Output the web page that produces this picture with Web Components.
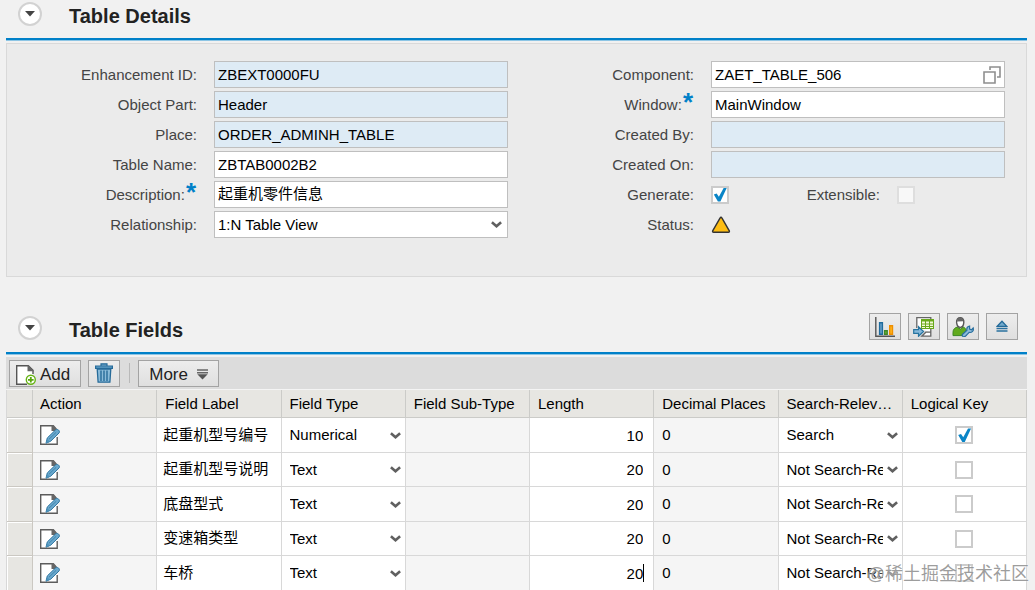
<!DOCTYPE html>
<html lang="en">
<head>
<meta charset="utf-8">
<title>Table Details</title>
<style>
	body {
		margin: 0;
		padding: 0 8px 0 6px;
		background: #f1f1f1;
		color: #000;
		font: 15px/20px "Liberation Sans", "Noto Sans CJK SC", sans-serif;
	}
	page-section + page-section {
		margin-top: 37px;
	}
</style>
</head>
<body>
<page-section heading="Table Details">
	<form-panel>
		<form-field label="Enhancement ID" value="ZBEXT0000FU" readonly></form-field>
		<form-field label="Object Part" value="Header" readonly></form-field>
		<form-field label="Place" value="ORDER_ADMINH_TABLE" readonly></form-field>
		<form-field label="Table Name" value="ZBTAB0002B2"></form-field>
		<form-field label="Description" value="起重机零件信息" lang="zh" required></form-field>
		<form-field label="Relationship" value="1:N Table View" type="select"></form-field>
		<form-field slot="right" label="Component" value="ZAET_TABLE_506" type="help"></form-field>
		<form-field slot="right" label="Window" value="MainWindow" required></form-field>
		<form-field slot="right" label="Created By" readonly></form-field>
		<form-field slot="right" label="Created On" readonly></form-field>
		<form-field slot="right" label="Generate" type="checks" extra="Extensible"></form-field>
		<form-field slot="right" label="Status" type="status"></form-field>
	</form-panel>
</page-section>
<page-section heading="Table Fields">
	<tool-button slot="tools" icon="chart" label="Chart"></tool-button>
	<tool-button slot="tools" icon="export" label="Export"></tool-button>
	<tool-button slot="tools" icon="user" label="Personalize"></tool-button>
	<tool-button slot="tools" icon="eject" label="Collapse"></tool-button>
	<tool-bar>
		<tool-button icon="add" wide>Add</tool-button>
		<tool-button icon="trash" label="Delete"></tool-button>
		<hr>
		<tool-button icon="more" wide trailing>More</tool-button>
	</tool-bar>
	<fields-table></fields-table>
</page-section>
<water-mark>@稀土掘金技术社区</water-mark>

<script>
const icons = {
	chart: `<svg width="20" height="20" viewBox="0 0 20 20"><path d="M.8 0v19.2H20" fill="none" stroke="#555" stroke-width="1.4"/><path d="M4.6 5.8h2.8v11.4H4.6z" fill="#6ba4cd" stroke="#1f6b9d" stroke-width="1.4"/><path d="M9.6 13.8h2.6v3.4H9.6z" fill="#71b92e" stroke="#3f862b" stroke-width="1.4"/><path d="M14.7 8.7h2.8v8.5h-2.8z" fill="#ffb61c" stroke="#ee8e00" stroke-width="1.4"/></svg>`,
	export: `<svg width="22" height="20" viewBox="0 0 22 20"><path d="M3.8 11V.7h14v18.5h-9l4-4h5" fill="#fff" stroke="#666" stroke-width="1.3"/><path d="M8 2h13v10H8z" fill="#68a91b"/><path d="M9 4.5h3v2H9zM13 4.5h3v2h-3zM17 4.5h3v2h-3zM9 7.5h3v1.4H9zM13 7.5h3v1.4h-3zM17 7.5h3v1.4h-3zM9 10h3v1H9zM13 10h3v1h-3zM17 10h3v1h-3z" fill="#f3f8d8"/><path d="M.7 12.6h4.8V9.7l5 4.8-5 4.8v-2.9H.7z" fill="#86b8da" stroke="#27749f" stroke-width="1.2"/></svg>`,
	user: `<svg width="22" height="20" viewBox="0 0 22 20"><path d="M1 18.6v-3.3c0-3 2-4.7 4.3-5.2l3 2 3-2c1.8.7 2.9 2 2.9 4v4.5z" fill="#61aa1d" stroke="#3c8723"/><path d="M4.6 5.4C4.4 2.2 6 .8 8.2.8s3.9 1.6 3.6 4.6c-.2 2.8-1.6 5-3.6 5s-3.3-2-3.6-5z" fill="#fff" stroke="#555" stroke-width="1.4"/><path d="M5 4.5l6.6-.2-.7-2.6-3-1-2.5 1.5z" fill="#666"/><path d="M10.6 17.2l4.3-3.9c-.4-2 .5-3.8 2.7-4.3v3.1l2 .6 1.6-1.8c.8 2.8-1.2 5-4 4.5l-3.9 3.9c-1.8 1.3-4-.4-2.7-2.1z" fill="#8dbad8" stroke="#286f9f" stroke-width="1.2"/></svg>`,
	eject: `<svg width="12" height="20" viewBox="0 0 12 20"><path d="M1.2 9.3L6 4.2l4.8 5.1z" fill="#72aacd" stroke="#256b99" stroke-width="1.3"/><path d="M.5 11.5h11M.5 14h11" stroke="#2a719f" stroke-width="1.4"/></svg>`,
	add: `<svg width="20" height="20" viewBox="0 0 20 20"><path d="M11 19.2H.7V.7h11.6L17 5.3V9" fill="#fff" stroke="#555" stroke-width="1.4"/><path d="M11.5 0L18 6.2h-6.5z" fill="#666"/><circle cx="14.8" cy="14.8" r="4.5" fill="#fff" stroke="#65b313" stroke-width="1.4"/><path d="M14.8 12v5.6M12 14.8h5.6" stroke="#58a60b" stroke-width="1.8"/></svg>`,
	trash: `<svg width="18" height="20" viewBox="0 0 18 20"><path d="M6 2.8V.8h6v2M.6 3h16.8v2.3H.6z" fill="#62a0c8" stroke="#276b99" stroke-width="1.2"/><path d="M2.2 6h13.6l-.9 13.2H3.1z" fill="#8abbd9" stroke="#276b99" stroke-width="1.3"/><path d="M6 7.5V18M9 7.5V18M12 7.5V18" stroke="#276b99" stroke-width="1.4"/></svg>`,
	more: `<svg width="11" height="11" viewBox="0 0 11 11"><path d="M0 1h11M0 3.8h11" stroke="#666" stroke-width="1.6"/><path d="M.3 5.2h10.4L5.5 10.4z" fill="#555"/></svg>`,
	edit: `<svg width="20" height="20" viewBox="0 0 20 20"><path d="M17.2 12v7.2H.7V.7h12L16 4" fill="#fff" stroke="#5c5c5c" stroke-width="1.4"/><path d="M11.5 0h2.2L17 4l-2 2h-3.5z" fill="#666"/><path d="M6 18.2l1.3-5.3 8.4-8.1c1.8-1.4 4.8 1.2 3.4 3.1l-8.4 8.3z" fill="#6ba9ce" stroke="#2c749f" stroke-width="1"/><path d="M8.9 14.3l7.3-7" stroke="#3d84ad" stroke-width="1"/><path d="M6 18.2l1.2-4.2 2.8 2.8z" fill="#4e93bb"/></svg>`,
	chevron: `<svg class="chevron" width="11" height="7" viewBox="0 0 11 7"><path d="M.9 1.2l4.6 4 4.6-4" fill="none" stroke="#606060" stroke-width="2.6"/></svg>`,
	help: `<svg class="help" width="18" height="18" viewBox="0 0 18 18"><path d="M7 4V1h10v10h-3M1 6h11v11H1z" fill="none" stroke="#8f8f8f" stroke-width="1.6"/></svg>`,
	warning: `<svg width="20" height="18" viewBox="0 0 20 18" role="img" aria-label="Warning"><path d="M9 2.2Q10 .2 11 2.2l7.3 12.6q.5 1.4-.9 1.4H2.6q-1.4 0-.9-1.4z" fill="#fdbd13" stroke="#333" stroke-width="1.4"/></svg>`,
	collapse: `<svg width="10" height="6" viewBox="0 0 10 6"><path d="M0 0h10L5 5.6z" fill="#444"/></svg>`
};

// shared by every shadow root that holds inputs
const controlStyle = `
	* { box-sizing: border-box; }
	input, select, button { font: inherit; color: inherit; margin: 0; }
	input:focus, select:focus { outline: none; }
	select { appearance: none; cursor: pointer; }
	.stack { display: grid; align-items: center; min-width: 0; }
	.stack > * { grid-area: 1 / 1; }
	.stack > svg { justify-self: end; pointer-events: none; }
	input[type="checkbox"] {
		appearance: none;
		display: grid;
		place-items: center;
		width: 18px;
		height: 18px;
		border: 2px solid #cbcbcb;
		background: #fff;
	}
	input[type="checkbox"]:checked::before {
		content: "";
		width: 14px;
		height: 14px;
		background: #0a85c7;
		clip-path: polygon(6% 50%, 26% 42%, 42% 66%, 76% 4%, 98% 4%, 53% 100%, 35% 100%);
	}
	input[type="checkbox"]:disabled { border-color: #dedede; background: #f8f8f8; }
`;

class PageSection extends HTMLElement {
	connectedCallback() {
		this.attachShadow({ mode: "open" }).innerHTML = `
      <style>
        :host { display: block; }
        header {
          display: flex;
          align-items: flex-end;
          height: 38px;
          box-sizing: border-box;
          padding: 0 9px 12px 12px;
        }
        .toggle {
          display: grid;
          place-items: center;
          width: 24px;
          height: 24px;
          padding: 0;
          border: 2px solid #d2d2d2;
          border-radius: 50%;
          background: #fff;
        }
        h2 { flex: 1; margin: 0 0 0 27px; font-size: 20px; line-height: 20px; color: #222; }
        .tools { display: flex; gap: 7px; }
        .line { height: 2px; background: #0080c8; border-bottom: 1px solid #8dc5e4; margin-bottom: 2px; }
      </style>
      <header>
        <button class="toggle" aria-label="Collapse section">${icons.collapse}</button>
        <h2>${this.getAttribute("heading")}</h2>
        <div class="tools"><slot name="tools"></slot></div>
      </header>
      <div class="line"></div>
      <div class="content"><slot></slot></div>
    `;
		this.shadowRoot.querySelector(".toggle").addEventListener("click", this.toggle.bind(this));
	}

	toggle() {
		const content = this.shadowRoot.querySelector(".content");
		content.hidden = !content.hidden;
	}
}

class FormPanel extends HTMLElement {
	connectedCallback() {
		this.attachShadow({ mode: "open" }).innerHTML = `
      <style>
        :host {
          display: grid;
          grid-template-columns: 1fr 1fr;
          padding: 17px 21px 38px 4px;
          border: 1px solid #d9d9d9;
          background: #ebebeb;
        }
        div { display: flex; flex-direction: column; gap: 3px; }
      </style>
      <div><slot></slot></div>
      <div><slot name="right"></slot></div>
    `;
	}
}

class FormField extends HTMLElement {
	control() {
		const value = this.getAttribute("value") || "";
		switch (this.getAttribute("type")) {
			case "select":
				return `<div class="stack"><select id="ctl"><option>${value}</option></select>${icons.chevron}</div>`;
			case "help":
				return `<div class="stack"><input id="ctl" type="text" value="${value}">${icons.help}</div>`;
			case "checks":
				return `
          <div class="checks">
            <input id="ctl" type="checkbox" checked>
            <label class="second" for="extra">${this.getAttribute("extra")}:</label>
            <input id="extra" type="checkbox" disabled>
          </div>`;
			case "status":
				return icons.warning;
			default:
				return `<input id="ctl" type="text" value="${value}" ${this.hasAttribute("readonly") ? "readonly" : ""}>`;
		}
	}

	connectedCallback() {
		const star = this.hasAttribute("required") ? `<b>*</b>` : "";
		const tag = this.getAttribute("type") === "status" ? "span" : "label";
		this.attachShadow({ mode: "open" }).innerHTML = `
      <style>
        ${controlStyle}
        :host {
          display: grid;
          grid-template-columns: 186px 1fr;
          column-gap: 17px;
          align-items: center;
          height: 27px;
        }
        .label { display: flex; justify-content: flex-end; align-items: center; height: 27px; color: #444; }
        b { align-self: flex-start; padding: 0 1px; font-size: 26px; line-height: 22px; color: #0080c8; }
        input[type="text"], select {
          width: 100%;
          height: 27px;
          padding: 0 3px;
          border: 1px solid #bfbfbf;
          border-radius: 0;
          background: #fff;
        }
        :host([lang="zh"]) input[type="text"] { padding-bottom: 4px; }
        input[readonly] { background: #deebf5; }
        .chevron { margin-right: 6px; }
        .help { margin-right: 4px; }
        .checks { display: flex; align-items: center; }
        .second { width: 151px; margin-right: 17px; text-align: right; color: #444; }
      </style>
      <${tag} class="label" ${tag === "label" ? `for="ctl"` : ""}>${this.getAttribute("label")}:${star}</${tag}>
      ${this.control()}
    `;
	}
}

class ToolBar extends HTMLElement {
	connectedCallback() {
		this.attachShadow({ mode: "open" }).innerHTML = `
      <style>
        :host {
          display: flex;
          align-items: center;
          gap: 7px;
          height: 32px;
          padding-left: 3px;
          background: #dcdcdc;
          border-bottom: 1px solid #f4f4f4;
        }
        ::slotted(hr) { width: 1px; height: 20px; margin: 0 1px 0 2px; border: 0; background: #b9b9b9; }
      </style>
      <slot></slot>
    `;
	}
}

class ToolButton extends HTMLElement {
	connectedCallback() {
		const icon = icons[this.getAttribute("icon")];
		const label = this.getAttribute("label");
		this.attachShadow({ mode: "open" }).innerHTML = `
      <style>
        :host { display: block; }
        button {
          display: flex;
          align-items: center;
          justify-content: center;
          box-sizing: border-box;
          width: 32px;
          height: 27px;
          padding: 0;
          border: 1px solid #a3a3a3;
          background: linear-gradient(#ededed, #dfdfdf);
          color: #222;
          font: inherit;
          font-size: 17px;
        }
        :host([wide]) button { width: auto; gap: 4px; padding: 3px 10px 0 6px; }
        :host([trailing]) button { flex-direction: row-reverse; gap: 9px; padding: 3px 10px 0; }
      </style>
      <button ${label ? `aria-label="${label}"` : ""}>${icon}<slot></slot></button>
    `;
	}
}

class FieldsTable extends HTMLElement {
	constructor() {
		super();
		this.columns = ["Action", "Field Label", "Field Type", "Field Sub-Type", "Length", "Decimal Places", "Search-Relev…", "Logical Key"];
		this.rows = [
			{ label: "起重机型号编号", type: "Numerical", length: 10, search: "Search", key: true },
			{ label: "起重机型号说明", type: "Text", length: 20, search: "Not Search-Relevant" },
			{ label: "底盘型式", type: "Text", length: 20, search: "Not Search-Relevant" },
			{ label: "变速箱类型", type: "Text", length: 20, search: "Not Search-Relevant" },
			{ label: "车桥", type: "Text", length: 20, search: "Not Search-Relevant", active: true }
		];
	}

	select(name, value) {
		return `<div class="stack"><select aria-label="${name}"><option>${value}</option></select>${icons.chevron}</div>`;
	}

	row({ label, type, length, search, key, active }) {
		return `
      <tr>
        <td class="selector"></td>
        <td class="fixed action"><button aria-label="Edit">${icons.edit}</button></td>
        <td class="name"><input type="text" lang="zh" aria-label="Field Label" value="${label}"></td>
        <td>${this.select("Field Type", type)}</td>
        <td class="fixed"></td>
        <td><div class="length ${active ? "active" : ""}"><input type="text" aria-label="Length" value="${length}"></div></td>
        <td class="fixed decimal">0</td>
        <td>${this.select("Search-Relevance", search)}</td>
        <td class="key"><input type="checkbox" aria-label="Logical Key" ${key ? "checked" : ""}></td>
      </tr>`;
	}

	connectedCallback() {
		this.attachShadow({ mode: "open" }).innerHTML = `
      <style>
        ${controlStyle}
        :host { display: block; }
        table {
          width: 100%;
          table-layout: fixed;
          border-collapse: separate;
          border-spacing: 0;
          border-left: 1px solid #d8d8d8;
        }
        th {
          height: 28px;
          padding: 0 0 0 8px;
          border-right: 1px solid #cbcbc8;
          border-bottom: 1px solid #cbcbc8;
          background: #e7e6e2;
          font-weight: normal;
          text-align: left;
          white-space: nowrap;
        }
        th:first-child { width: 26px; padding: 0; }
        th:nth-child(2), td.action { padding-left: 7px; }
        td {
          height: 35px;
          padding: 0;
          border-right: 1px solid #d8d8d8;
          border-bottom: 1px solid #d8d8d8;
          background: #fff;
        }
        tr:nth-child(even) td, tr:last-child td { height: 34px; }
        tr:last-child td { border-bottom: 0; }
        td.fixed { background: #f5f5f5; }
        td.selector {
          border-color: #cbc8c2;
          background: #e7e6e2;
          box-shadow: inset 1px 1px #fff;
        }
        .action button { display: block; padding: 0; border: 0; background: none; }
        .action svg { display: block; }
        td.decimal { padding-left: 8px; }
        td input[type="text"], select { display: block; width: 100%; height: 26px; padding: 0; border: 0; background: none; }
        td.name { padding-left: 6px; }
        td.name input { padding-bottom: 4px; }
        td select { padding: 0 19px 0 8px; }
        .chevron { margin-right: 4px; }
        .length { display: flex; align-items: center; padding-right: 10px; }
        .length input { text-align: right; }
        .length.active::after { content: ""; flex: none; width: 1px; height: 18px; margin-right: -1px; background: #000; }
        .key input { margin: 0 auto; }
      </style>
      <table>
        <thead><tr><th></th>${this.columns.map((name) => `<th>${name}</th>`).join("")}</tr></thead>
        <tbody>${this.rows.map((row) => this.row(row)).join("")}</tbody>
      </table>
    `;
	}
}

class WaterMark extends HTMLElement {
	connectedCallback() {
		this.attachShadow({ mode: "open" }).innerHTML = `
      <style>
        :host {
          position: absolute;
          right: 6px;
          bottom: 4px;
          font-size: 18px;
          line-height: 24px;
          color: rgba(140, 140, 140, .85);
          text-shadow: 0 0 2px #fff;
          pointer-events: none;
        }
      </style>
      <slot></slot>
    `;
	}
}

customElements.define("page-section", PageSection);
customElements.define("form-panel", FormPanel);
customElements.define("form-field", FormField);
customElements.define("tool-bar", ToolBar);
customElements.define("tool-button", ToolButton);
customElements.define("fields-table", FieldsTable);
customElements.define("water-mark", WaterMark);
</script>
</body>
</html>
